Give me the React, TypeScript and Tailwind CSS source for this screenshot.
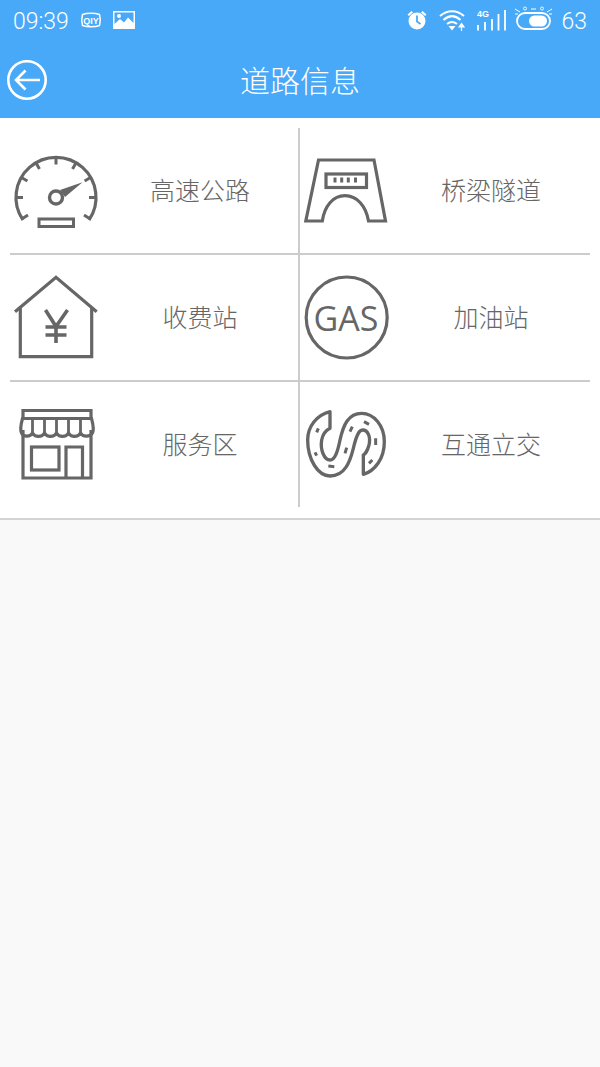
// Tela "道路信息": barra de status, cabeçalho e grade de categorias
const ink = "#666666";

function Gauge() {
  return (
    <svg width="90" height="125" viewBox="10 128 90 125" fill="none" stroke={ink} strokeWidth="3.2">
      <path d="M23 220A40 40 0 1 1 89 220" />
      {[-122, -90, -60, -30, 0, 30, 60, 90, 122].map((a) => (
        <line key={a} x1="56" y1="158" x2="56" y2="164.5" strokeWidth="3" transform={`rotate(${a} 56 197.5)`} />
      ))}
      <circle cx="56" cy="197.5" r="6.5" strokeWidth="3.4" />
      <path d="M60 190L82.5 182.3L65 197Z" fill={ink} stroke="none" />
      <rect x="39" y="219" width="34.5" height="7.5" strokeWidth="3" />
    </svg>
  );
}

function BridgeIcon() {
  return (
    <svg width="90" height="125" viewBox="300 128 90 125" fill="none" stroke={ink} strokeWidth="3.2">
      <path d="M318.5 160H374L385.5 221H368.5C366 206 357 195.7 345 195.7C333 195.7 324.5 206 322.3 221H305.8Z" />
      <rect x="326" y="174" width="40.5" height="13.5" />
      <path d="M335 177.5V182.5M341.7 177.5V182.5M348.3 177.5V182.5M355.5 177.5V182.5" strokeWidth="3" />
    </svg>
  );
}

function TollIcon() {
  return (
    <svg width="90" height="125" viewBox="10 255 90 125" fill="none" stroke={ink} strokeWidth="3.2">
      <path d="M15 311.7L56 277.3L96.7 311.7" />
      <path d="M20.3 308V356.7H91.7V308" />
      <path d="M45.5 310L56 326.5L67.5 310M56 326.5V343M45.5 327H66.5M45.5 335H66.5" strokeWidth="3.6" />
    </svg>
  );
}

function GasIcon() {
  return (
    <svg width="90" height="125" viewBox="300 255 90 125" fill="none">
      <circle cx="346.7" cy="317.5" r="40.5" stroke={ink} strokeWidth="3.2" />
      <text x="346" y="331" textAnchor="middle" fontFamily="'Open Sans', sans-serif" fontSize="34" fill={ink}>
        GAS
      </text>
    </svg>
  );
}

function StoreIcon() {
  return (
    <svg width="90" height="125" viewBox="10 382 90 125" fill="none" stroke={ink} strokeWidth="3.2">
      <path d="M23 430V478H91V430M23 418V410.5H91V418" />
      <path d="M22.5 418.5H91.5C93 424 94 430 92.5 433C90 437 83 437.5 80.5 433C78 437.5 71 437.5 68.5 433C66 437.5 59 437.5 56.5 433C54 437.5 47 437.5 44.5 433C42 437.5 35 437.5 32.5 433C30 437.5 23 437 21.5 433C20 430 21 424 22.5 418.5Z" />
      <path d="M32.5 419V433M44.5 419V433M56.5 419V433M68.5 419V433M80.5 419V433" strokeWidth="2.8" />
      <rect x="31.5" y="447" width="27.5" height="23" />
      <path d="M66 478V447H82.5V478" />
    </svg>
  );
}

function InterchangeIcon() {
  return (
    <svg width="90" height="125" viewBox="15 -39 270 375" fill="none" stroke={ink} strokeWidth="10" strokeLinejoin="round">
      <path d="M105 50C65 60 38 95 38 135C38 195 70 243 105 243C150 243 165 200 175 160C182 130 190 105 203 105C218 105 228 125 222 150C218 165 210 178 205 180V238C240 228 268 190 268 140C268 90 235 55 200 55C160 55 145 90 135 135C128 170 120 195 105 195C88 195 75 165 80 135C84 115 95 105 105 100Z" />
      <path d="M70 100L65 112M60 172L65 182M100 213L118 215M155 158L150 175M172 95L165 110M207 80L222 88M242 130V150M232 195L222 205" strokeWidth="9" />
    </svg>
  );
}

function StatusBar() {
  return (
    <div className="h-10 flex items-center text-white font-['Roboto',sans-serif] font-light text-[23px]">
      <span className="ml-[13px] w-[55px] leading-none mt-[2px]">09:39</span>
      {/* iQIYI */}
      <svg className="ml-[13px] overflow-visible" width="20" height="16" viewBox="0 0 20 16" fill="none" stroke="white">
        <path d="M1.5 2.5C6 0.8 14 0.8 18.5 2.5C19.5 6 19.5 10 18.5 13.5C14 15.2 6 15.2 1.5 13.5C0.5 10 0.5 6 1.5 2.5Z" strokeWidth="1.5" />
        <text x="10" y="11.5" textAnchor="middle" fontSize="9" fontWeight="700" fontFamily="'Liberation Sans', sans-serif" fill="white" stroke="none">
          QIY
        </text>
      </svg>
      {/* imagem */}
      <svg className="ml-3" width="22" height="18" viewBox="0 0 22 18">
        <path fill="white" fillRule="evenodd" d="M0 0H22V18H0ZM1.5 1.5V13L7 8L11 11.5L15 6.5L20.5 12V1.5Z" />
        <circle cx="6" cy="5" r="2" fill="white" />
      </svg>

      <div className="flex-1" />

      {/* alarme */}
      <svg className="ml-px" width="20" height="20" viewBox="0 0 20 20">
        <circle cx="10" cy="11" r="8.5" fill="white" />
        <path d="M0.5 4.5L4.5 1L6 2.5L2 6ZM19.5 4.5L15.5 1L14 2.5L18 6Z" fill="white" />
        <path d="M10 5.5V11.5L13.5 14" fill="none" stroke="#48a9f8" strokeWidth="1.8" />
      </svg>
      {/* wifi */}
      <svg className="ml-3" width="27" height="22" viewBox="0 0 27 22" fill="none" stroke="white" strokeWidth="2">
        <path d="M1 7C8 0.5 18 0.5 25 7M4.5 11C10 6 16 6 21.5 11M8 15C11 12.5 15 12.5 18 15" />
        <path d="M9.5 17H16.5L13 21.5Z" fill="white" stroke="none" />
        <path d="M20 18L22.5 14.5L25 18ZM22.5 17V22" fill="white" stroke="white" strokeWidth="1.2" />
      </svg>
      {/* 4G e sinal */}
      <svg className="ml-[11px]" width="29" height="22" viewBox="0 0 29 22" fill="none" stroke="white" strokeWidth="1.8">
        <text x="0" y="8" fontSize="9" fontWeight="700" fontFamily="'Liberation Sans', sans-serif" fill="white" stroke="none">
          4G
        </text>
        <path d="M1 16V21.5M8 13V21.5M15 10V21.5M21.5 5V21.5M28 1V21.5" />
      </svg>
      {/* bateria com enfeites */}
      <svg className="ml-[9px] -mt-1" width="37" height="24" viewBox="0 0 37 24" fill="none" stroke="white">
        <rect x="2" y="7" width="33" height="16" rx="8" strokeWidth="1.8" />
        <rect x="14" y="9.5" width="18" height="11" rx="5.5" fill="white" stroke="none" />
        <path d="M0 3L5 6M37 3L32 6M0 8H3M34 8H37M16 3H21" strokeWidth="1" />
        <circle cx="10" cy="2.5" r="1.5" strokeWidth="0.9" />
        <circle cx="27" cy="2.5" r="1.5" strokeWidth="0.9" />
      </svg>
      <span className="ml-[9px] mr-[13px] leading-none text-[23px] mt-[2px]">63</span>
    </div>
  );
}

const cells = [
  { label: "高速公路", icon: <Gauge />, cls: "border-r-2 border-b-2" },
  { label: "桥梁隧道", icon: <BridgeIcon />, cls: "border-b-2" },
  { label: "收费站", icon: <TollIcon />, cls: "border-r-2 border-b-2" },
  { label: "加油站", icon: <GasIcon />, cls: "border-b-2" },
  { label: "服务区", icon: <StoreIcon />, cls: "border-r-2" },
  { label: "互通立交", icon: <InterchangeIcon />, cls: "" },
];

export default function App() {
  return (
    <div className="w-[600px] h-[1067px] bg-[#f9f9f9] font-['Noto_Sans_CJK_SC',sans-serif] overflow-hidden">
      {/* Cabeçalho azul */}
      <header className="h-[118px] bg-[#48a9f8]">
        <StatusBar />
        <div className="h-[78px] flex items-center relative">
          <svg className="ml-[7px] mt-[2px]" width="40" height="40" viewBox="0 0 40 40" fill="none" stroke="white" strokeWidth="2.6">
            <circle cx="20" cy="20" r="18.7" />
            <path d="M9 20H33M18.5 10.5L9 20L18.5 29.5" />
          </svg>
          <h1 className="absolute inset-0 flex items-center justify-center text-white text-[30px] font-light">
            道路信息
          </h1>
        </div>
      </header>

      {/* Grade de categorias */}
      <section className="bg-white border-b-2 border-[#d4d4d4] px-[10px] pt-[10px] pb-[11px] grid grid-cols-[290px_290px] grid-rows-[127px_127px_125px]">
        {cells.map((c) => (
          <div key={c.label} className={`flex items-center border-[#cccccc] ${c.cls}`}>
            <div className="w-[90px] shrink-0">{c.icon}</div>
            <span className="flex-1 pl-[2px] -mt-[2px] text-center text-[25px] font-light text-[#666666]">{c.label}</span>
          </div>
        ))}
      </section>
    </div>
  );
}
